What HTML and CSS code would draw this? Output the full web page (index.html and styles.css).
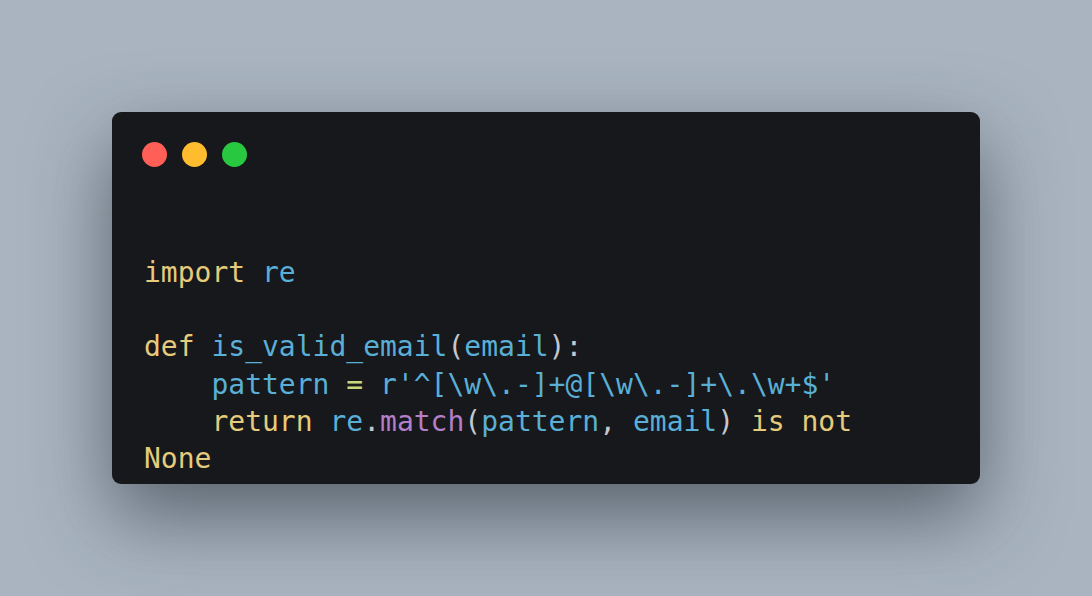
FILE: index.html
```html
<!DOCTYPE html>
<html>
<head>
<meta charset="utf-8">
<link rel="stylesheet" href="styles.css">
</head>
<body>
<div class="stage">
  <div class="window">
    <div class="titlebar">
      <span class="dot red"></span>
      <span class="dot yellow"></span>
      <span class="dot green"></span>
    </div>
    <pre class="code"><span class="kw">import</span> <span class="id">re</span>

<span class="kw">def</span> <span class="id">is_valid_email</span><span class="pn">(</span><span class="id">email</span><span class="pn">):</span>
    <span class="id">pattern</span> <span class="op">=</span> <span class="id">r'^[\w\.-]+@[\w\.-]+\.\w+$'</span>
    <span class="kw">return</span> <span class="id">re</span><span class="pn">.</span><span class="fn">match</span><span class="pn">(</span><span class="id">pattern</span><span class="pn">,</span> <span class="id">email</span><span class="pn">)</span> <span class="kw">is</span> <span class="kw">not</span> <span class="kw">None</span></pre>
  </div>
</div>
</body>
</html>
```

FILE: styles.css
```css
html, body {
  margin: 0;
  padding: 0;
}
body {
  background: #a9b4c0;
  width: 1092px;
  height: 596px;
  overflow: hidden;
}
.stage {
  height: 596px;
  display: flex;
  align-items: center;
  justify-content: center;
}
.window {
  width: 868px;
  height: 372px;
  box-sizing: border-box;
  background: #16181b;
  border-radius: 9px;
  box-shadow: 0 32px 80px rgba(35, 45, 55, 0.6);
  padding: 30px 76px 0 32px;
}
.titlebar {
  display: flex;
  gap: 15px;
  margin-left: -2px;
}
.dot {
  width: 25px;
  height: 25px;
  border-radius: 50%;
  display: block;
}
.red { background: #ff5f57; }
.yellow { background: #febc2e; }
.green { background: #28c840; }
.code {
  margin: 87px 0 0 0;
  font-family: "DejaVu Sans Mono", monospace;
  font-size: 28px;
  line-height: 37.2px;
  color: #c8ccd2;
  white-space: pre-wrap;
}
.kw { color: #e6cb7c; }
.id { color: #5aafd6; }
.fn { color: #b47ec8; }
.op { color: #c5d67c; }
.pn { color: #c4c8ce; }
```
